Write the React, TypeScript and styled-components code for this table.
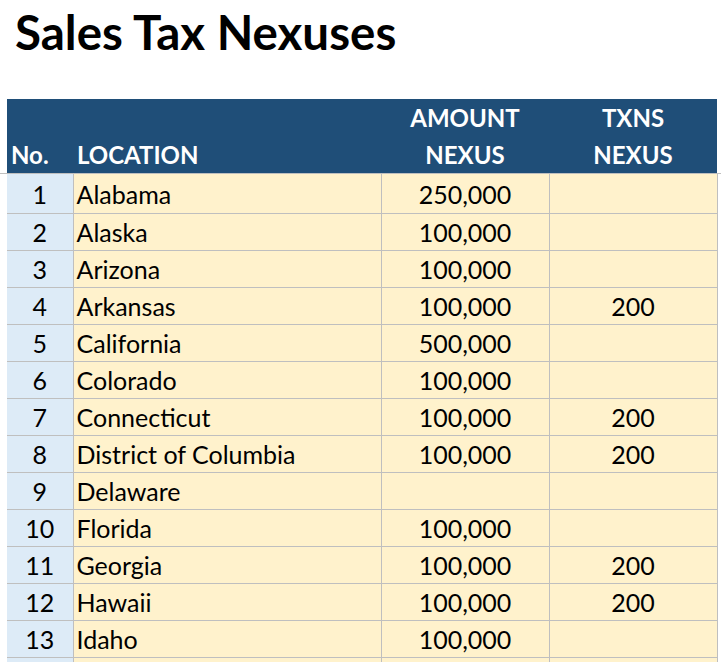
import React from "react";
import styled, { createGlobalStyle } from "styled-components";

const GlobalStyle = createGlobalStyle`
    body {
        margin: 0;
        background: #ffffff;
        font-family: Lato, "Noto Sans", sans-serif;
    }
`;

type Nexus = { no: number; location: string; amount?: string; txns?: string };

const rows: Nexus[] = [
    { no: 1, location: "Alabama", amount: "250,000" },
    { no: 2, location: "Alaska", amount: "100,000" },
    { no: 3, location: "Arizona", amount: "100,000" },
    { no: 4, location: "Arkansas", amount: "100,000", txns: "200" },
    { no: 5, location: "California", amount: "500,000" },
    { no: 6, location: "Colorado", amount: "100,000" },
    { no: 7, location: "Connecticut", amount: "100,000", txns: "200" },
    { no: 8, location: "District of Columbia", amount: "100,000", txns: "200" },
    { no: 9, location: "Delaware" },
    { no: 10, location: "Florida", amount: "100,000" },
    { no: 11, location: "Georgia", amount: "100,000", txns: "200" },
    { no: 12, location: "Hawaii", amount: "100,000", txns: "200" },
    { no: 13, location: "Idaho", amount: "100,000" },
];

export default function App() {
    return (
        <Page>
            <GlobalStyle />
            <Title>Sales Tax Nexuses</Title>
            <Sheet>
                <colgroup>
                    <col style={{ width: 7 }} />
                    <col style={{ width: 66 }} />
                    <col style={{ width: 308 }} />
                    <col style={{ width: 168 }} />
                    <col style={{ width: 168 }} />
                    <col style={{ width: 4 }} />
                </colgroup>
                <thead>
                    <tr>
                        <Gutter $head />
                        <Head $align="left">No.</Head>
                        <Head $align="left">LOCATION</Head>
                        <Head $align="center">AMOUNT<br />NEXUS</Head>
                        <Head $align="center">TXNS<br />NEXUS</Head>
                        <Gutter $head />
                    </tr>
                </thead>
                <tbody>
                    {rows.map((r, i) => (
                        <Row key={r.no} $first={i === 0}>
                            <Gutter />
                            <NoCell>{r.no}</NoCell>
                            <Cell $align="left">{r.location}</Cell>
                            <Cell $align="center">{r.amount}</Cell>
                            <Cell $align="center">{r.txns}</Cell>
                            <Gutter $edge />
                        </Row>
                    ))}
                    {/* next sheet row, only its top edge is in view */}
                    <Row $first={false}>
                        <Gutter />
                        <NoCell />
                        <Cell $align="left" />
                        <Cell $align="center" />
                        <Cell $align="center" />
                        <Gutter $edge />
                    </Row>
                </tbody>
            </Sheet>
        </Page>
    );
}

const Page = styled.div`
    width: 721px;
`;

const Title = styled.h1`
    margin: 0;
    height: 99px;
    padding: 9px 0 0 15px;
    box-sizing: border-box;
    font-family: Lato, "Noto Sans", sans-serif;
    font-size: 47.5px;
    font-weight: 700;
    line-height: 46px;
    color: #000000;
`;

const Sheet = styled.table`
    width: 721px;
    table-layout: fixed;
    border-collapse: collapse;
    font-size: 25px;
    color: #000000;
`;

const Gutter = styled.td<{ $head?: boolean; $edge?: boolean }>`
    padding: 0;
    background: #ffffff;
    border-bottom: ${(p) => (p.$head ? "1px solid #bfbfbf" : "none")};
    border-left: ${(p) => (p.$edge ? "1px solid #bfbfbf" : "none")};
`;

const Head = styled.th<{ $align: "left" | "center" }>`
    height: 74px;
    padding: 0 0 0 ${(p) => (p.$align === "left" ? "4px" : "0")};
    background: #1f4e78;
    color: #ffffff;
    font-weight: 700;
    font-size: 24px;
    line-height: 37px;
    text-align: ${(p) => p.$align};
    vertical-align: bottom;
    border-bottom: 1px solid #bfbfbf;
    box-sizing: border-box;
`;

const Row = styled.tr<{ $first: boolean }>`
    height: ${(p) => (p.$first ? "40px" : "37px")};
`;

const Cell = styled.td<{ $align: "left" | "center" }>`
    padding: 0 0 0 ${(p) => (p.$align === "left" ? "3px" : "0")};
    background: #fff2cc;
    border: 1px solid #bfbfbf;
    text-align: ${(p) => p.$align};
    vertical-align: middle;
    line-height: 28px;
    white-space: nowrap;
`;

const NoCell = styled(Cell).attrs({ $align: "center" as const })`
    background: #ddebf7;
    border-left: none;
`;
